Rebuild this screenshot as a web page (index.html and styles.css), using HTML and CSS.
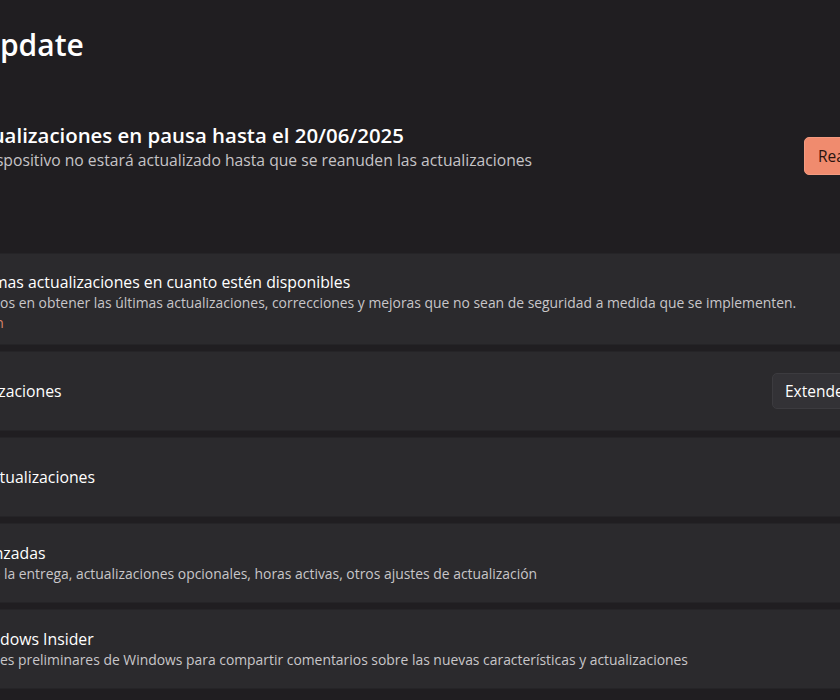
FILE: index.html
```html
<!DOCTYPE html>
<html>
<head>
  <title>Windows Update</title>
  <link rel="stylesheet" href="styles.css">
</head>
<body>
  <div class="page">
    <h1 class="page-title">Windows Update</h1>

    <div class="status">
      <div class="status-icon">
        <svg width="48" height="48" viewBox="0 0 48 48">
          <path d="M38 24a14 14 0 1 1-4.1-9.9" fill="none" stroke="#f08b6e" stroke-width="3" stroke-linecap="round"/>
          <path d="M35 8v7h-7" fill="none" stroke="#f08b6e" stroke-width="3" stroke-linecap="round" stroke-linejoin="round"/>
          <rect x="19" y="18" width="3" height="12" rx="1" fill="#f08b6e"/>
          <rect x="26" y="18" width="3" height="12" rx="1" fill="#f08b6e"/>
        </svg>
      </div>
      <div class="status-text">
        <div class="status-title">Actualizaciones en pausa hasta el 20/06/2025</div>
        <div class="status-desc">Tu dispositivo no estará actualizado hasta que se reanuden las actualizaciones</div>
      </div>
      <button class="btn btn-accent">Reanudar actualizaciones</button>
    </div>

    <h2 class="section-title">Más opciones</h2>

    <div class="card-list">
      <div class="card card-tall">
        <div class="card-icon">
          <svg width="22" height="22" viewBox="0 0 22 22"><path d="M4 14a7 7 0 1 1 14 0" fill="none" stroke="#ddd" stroke-width="1.4"/><path d="M11 3v4M11 14l3-4" stroke="#ddd" stroke-width="1.4" stroke-linecap="round"/></svg>
        </div>
        <div class="card-text">
          <div class="card-title">Obtén las últimas actualizaciones en cuanto estén disponibles</div>
          <div class="card-desc">Sé de los primeros en obtener las últimas actualizaciones, correcciones y mejoras que no sean de seguridad a medida que se implementen.</div>
          <a class="card-link" href="#">Más información</a>
        </div>
        <div class="card-action">
          <span class="toggle-label">Desactivado</span>
          <span class="toggle"></span>
        </div>
      </div>

      <div class="card">
        <div class="card-icon">
          <svg width="22" height="22" viewBox="0 0 22 22"><rect x="6" y="4" width="3" height="14" rx="1" fill="none" stroke="#ddd" stroke-width="1.3"/><rect x="13" y="4" width="3" height="14" rx="1" fill="none" stroke="#ddd" stroke-width="1.3"/></svg>
        </div>
        <div class="card-text">
          <div class="card-title">Pausar actualizaciones</div>
        </div>
        <div class="card-action">
          <button class="btn btn-secondary">Extender 1 semana</button>
        </div>
      </div>

      <div class="card">
        <div class="card-icon">
          <svg width="22" height="22" viewBox="0 0 22 22"><circle cx="11" cy="11" r="8" fill="none" stroke="#ddd" stroke-width="1.3"/><path d="M11 6v5h4" fill="none" stroke="#ddd" stroke-width="1.3"/></svg>
        </div>
        <div class="card-text">
          <div class="card-title">Historial de actualizaciones</div>
        </div>
        <div class="card-action">
          <span class="chevron">&#8250;</span>
        </div>
      </div>

      <div class="card">
        <div class="card-icon">
          <svg width="22" height="22" viewBox="0 0 22 22"><circle cx="11" cy="11" r="3" fill="none" stroke="#ddd" stroke-width="1.3"/><circle cx="11" cy="11" r="7.5" fill="none" stroke="#ddd" stroke-width="1.3" stroke-dasharray="3 2"/></svg>
        </div>
        <div class="card-text">
          <div class="card-title">Opciones avanzadas</div>
          <div class="card-desc">Optimización de la entrega, actualizaciones opcionales, horas activas, otros ajustes de actualización</div>
        </div>
        <div class="card-action">
          <span class="chevron">&#8250;</span>
        </div>
      </div>

      <div class="card">
        <div class="card-icon">
          <svg width="22" height="22" viewBox="0 0 22 22"><path d="M5 12a6 6 0 0 1 12 0v5H5z" fill="none" stroke="#ddd" stroke-width="1.3"/><circle cx="11" cy="6" r="2" fill="none" stroke="#ddd" stroke-width="1.3"/></svg>
        </div>
        <div class="card-text">
          <div class="card-title">Programa Windows Insider</div>
          <div class="card-desc">Obtener versiones preliminares de Windows para compartir comentarios sobre las nuevas características y actualizaciones</div>
        </div>
        <div class="card-action">
          <span class="chevron">&#8250;</span>
        </div>
      </div>
    </div>
  </div>
</body>
</html>
```

FILE: styles.css
```css
html, body {
  overflow: hidden;
}

body {
  margin: 0;
  background-color: #201e21;
  color: #ffffff;
  font-family: "Open Sans", "Noto Sans", sans-serif;
}

/* the window is scrolled so the left part of the page is out of view */
.page {
  width: 1178px;
  margin-left: -162px;
  padding-top: 25px;
}

.page-title {
  margin: 0;
  font-size: 30px;
  line-height: 40px;
  font-weight: 600;
}

/* Paused banner */

.status {
  display: flex;
  align-items: flex-start;
  margin-top: 56px;
}

.status-icon {
  flex: none;
  width: 122px;
}

.status-text {
  flex: 1;
}

.status-title {
  font-size: 20.4px;
  line-height: 28px;
  font-weight: 600;
}

.status-desc {
  font-size: 15.7px;
  line-height: 22px;
  color: #c6c4c7;
}

.btn {
  flex: none;
  font-family: inherit;
  font-size: 15.5px;
  border-radius: 5px;
  cursor: pointer;
}

.btn-accent {
  width: 212px;
  height: 38px;
  margin-top: 16px;
  background-color: #f08b6e;
  color: #2a140f;
  border: 1px solid #f39a80;
}

.btn-secondary {
  width: 173px;
  height: 36px;
  margin-right: 54px;
  padding: 0 12px;
  text-align: left;
  background-color: #333236;
  color: #ffffff;
  border: 1px solid #3c3b3f;
}

.section-title {
  margin: 44px 0 12px;
  font-size: 14px;
  line-height: 22px;
  font-weight: 600;
}

/* Cards */

.card-list {
  display: flex;
  flex-direction: column;
  gap: 6px;
}

.card {
  display: flex;
  align-items: center;
  box-sizing: border-box;
  min-height: 80px;
  padding: 0 16px;
  background-color: #2b2a2d;
  border: 1px solid #252427;
  border-radius: 5px;
}

.card-tall {
  align-items: flex-start;
  padding: 17px 16px 11px;
}

.card-icon {
  flex: none;
  width: 40px;
  display: flex;
}

.card-text {
  flex: 1;
}

.card-title {
  font-size: 15.8px;
  line-height: 22px;
}

.card-desc {
  font-size: 13.9px;
  line-height: 20px;
  color: #c8c6c9;
}

.card-link {
  display: block;
  font-size: 13.9px;
  line-height: 20px;
  color: #d9856c;
  text-decoration: none;
}

.card-action {
  flex: none;
  display: flex;
  align-items: center;
  gap: 12px;
}

.toggle-label {
  font-size: 14px;
}

.toggle {
  width: 40px;
  height: 20px;
  box-sizing: border-box;
  border: 1px solid #cfcfcf;
  border-radius: 10px;
}

.chevron {
  font-size: 22px;
  color: #cfcfcf;
}
```
